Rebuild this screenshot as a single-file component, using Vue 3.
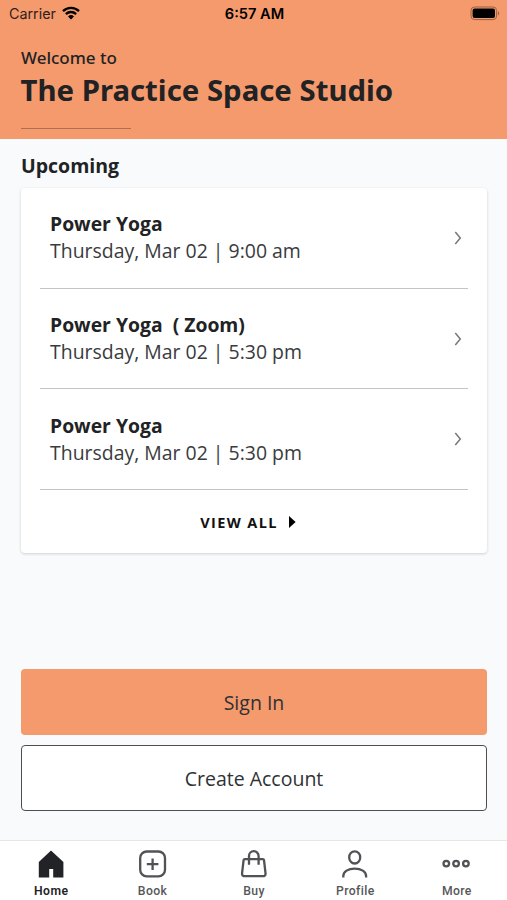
<template>
  <div class="screen">
    <header class="header">
      <div class="status-bar">
        <div class="carrier">
          <span>Carrier</span>
          <svg class="wifi" width="18" height="14" viewBox="0 0 18 14">
            <path d="M1 5.1a11.6 11.6 0 0 1 16 0" />
            <path d="M3.9 8.1a7.4 7.4 0 0 1 10.2 0" />
            <path class="wifi-dot" d="M6 10.4a4.4 4.4 0 0 1 6 0L9 13.5z" />
          </svg>
        </div>
        <span class="time">6:57 AM</span>
        <svg class="battery" width="31" height="15" viewBox="0 0 31 15">
          <rect class="battery-case" x="1" y="1" width="25.6" height="12.6" rx="3.6" />
          <rect x="2.6" y="2.6" width="22.4" height="9.4" rx="2" />
          <path class="battery-tip" d="M28 5.2q2.4 2.1 0 4.2z" />
        </svg>
      </div>
      <p class="welcome">Welcome to</p>
      <h1>The Practice Space Studio</h1>
      <div class="title-line"></div>
    </header>

    <main class="content">
      <h2>Upcoming</h2>
      <section class="card">
        <div v-for="(item, i) in classes" :key="i" class="class-row">
          <div>
            <div class="class-name">{{ item.name }}</div>
            <div class="class-time">{{ item.time }}</div>
          </div>
          <svg class="chevron" width="8" height="14" viewBox="0 0 8 14">
            <path d="M1.3 1 6.3 7 1.3 13" />
          </svg>
        </div>
        <div class="view-all">
          <span>VIEW ALL</span>
          <svg width="7" height="12" viewBox="0 0 7 12"><path d="M0 0 6.6 6 0 12z" /></svg>
        </div>
      </section>

      <div class="actions">
        <button class="btn primary">Sign In</button>
        <button class="btn outline">Create Account</button>
      </div>
    </main>

    <nav class="tabs">
      <div v-for="tab in tabs" :key="tab" class="tab" :class="{ active: tab === activeTab }" @click="activeTab = tab">
        <svg class="tab-icon" width="30" height="30" viewBox="0 0 30 30">
          <path v-if="tab === 'Home'" class="solid" d="M15 1.4 27.4 13V28.4H17.2V20H13.2V28.4H2.8V13z" />
          <template v-else-if="tab === 'Book'">
            <rect x="2.2" y="2.5" width="24.8" height="24.8" rx="6.5" />
            <path d="M14.6 9.4v11.6M8.8 15.2h11.6" />
          </template>
          <template v-else-if="tab === 'Buy'">
            <path d="M5.8 10.1H23.8Q24.8 10.1 25 11.1L26.5 24Q26.9 27.2 23.6 27.2H6Q2.7 27.2 3.1 24L4.6 11.1Q4.8 10.1 5.8 10.1z" />
            <path d="M10 15.8V7a4.8 4.8 0 0 1 9.6 0v8.8" />
          </template>
          <template v-else-if="tab === 'Profile'">
            <ellipse cx="14.7" cy="8.4" rx="5.5" ry="6.1" />
            <path d="M3.3 28.4V27C3.3 22.5 8.2 19.6 14.7 19.6S26.1 22.5 26.1 27v1.4" />
          </template>
          <template v-else>
            <circle cx="4.3" cy="14.6" r="2.8" />
            <circle cx="14.1" cy="14.6" r="2.8" />
            <circle cx="23.9" cy="14.6" r="2.8" />
          </template>
        </svg>
        <span>{{ tab }}</span>
      </div>
    </nav>
  </div>
</template>

<script setup>
import { ref } from 'vue'

const classes = [
  { name: 'Power Yoga', time: 'Thursday, Mar 02 | 9:00 am' },
  { name: 'Power Yoga  ( Zoom)', time: 'Thursday, Mar 02 | 5:30 pm' },
  { name: 'Power Yoga', time: 'Thursday, Mar 02 | 5:30 pm' },
]
const tabs = ['Home', 'Book', 'Buy', 'Profile', 'More']
const activeTab = ref('Home')
</script>

<style>
body {
  margin: 0;
}
</style>

<style scoped>
.screen {
  display: flex;
  flex-direction: column;
  height: 900px;
  overflow: hidden;
  background: #f8fafc;
  color: #212224;
  font-family: "Open Sans", sans-serif;
}
.header {
  box-sizing: border-box;
  height: 139px;
  background: #f59a6d;
}
.status-bar {
  display: grid;
  grid-template-columns: 1fr auto 1fr;
  align-items: center;
  height: 28px;
  padding: 0 7px 0 9px;
  color: #000;
  font: 14.3px/28px Inter, sans-serif;
}
.carrier {
  display: flex;
  align-items: center;
  gap: 6px;
  color: #30211a;
}
.wifi {
  margin-top: -2px;
  fill: none;
  stroke: #000;
  stroke-width: 2.4;
}
.wifi-dot {
  fill: #000;
  stroke: none;
}
.time {
  font-size: 14.6px;
  font-weight: 600;
}
.battery {
  justify-self: end;
  margin: -2px -1px 0 0;
}
.battery-case {
  fill: none;
  stroke: #98603f;
}
.battery-tip {
  fill: #98603f;
}
.welcome {
  margin: 18px 0 0 21px;
  font: 500 17px/24px "Noto Sans", sans-serif;
}
h1 {
  margin: 0 0 0 20.5px;
  font: 700 29.35px/40px "Noto Sans", sans-serif;
}
.title-line {
  width: 110px;
  height: 1px;
  margin: 18px 0 0 21px;
  background: #ad7050;
}
.content {
  flex: 1;
  display: flex;
  flex-direction: column;
  padding: 0 20px 29px 21px;
}
h2 {
  margin: 13px 0 8px;
  font-size: 19.5px;
  font-weight: 700;
  line-height: 28px;
}
.card {
  box-sizing: border-box;
  height: 365px;
  padding: 0 19px;
  border-radius: 4px;
  background: #fff;
  box-shadow: 0 1px 3px rgba(0, 0, 0, 0.17);
}
.class-row {
  box-sizing: border-box;
  display: flex;
  align-items: center;
  justify-content: space-between;
  height: 100.7px;
  padding: 0 6px 1px 10px;
  border-bottom: 1px solid #c4c4c4;
}
.class-name {
  font-size: 19.35px;
  font-weight: 700;
  line-height: 27px;
  white-space: pre;
}
.class-time {
  font-size: 19.45px;
  line-height: 27px;
  color: #3a3b3d;
}
.chevron {
  margin-top: 1px;
  fill: none;
  stroke: #777;
  stroke-width: 1.5;
}
.view-all {
  display: flex;
  align-items: center;
  justify-content: center;
  gap: 11px;
  height: 64px;
  padding-right: 12px;
  color: #111;
  font-size: 14.5px;
  font-weight: 700;
  letter-spacing: 1.4px;
}
.actions {
  display: flex;
  flex-direction: column;
  gap: 10px;
  margin-top: auto;
}
.btn {
  box-sizing: border-box;
  height: 66px;
  border: 0;
  border-radius: 4px;
  color: #303133;
  font: 19.5px "Open Sans", sans-serif;
}
.primary {
  background: #f59a6d;
}
.outline {
  border: 1.5px solid #4d4e50;
  background: #fff;
}
.tabs {
  box-sizing: border-box;
  display: flex;
  height: 60px;
  border-top: 1px solid #e4e6e8;
  background: #fff;
}
.tab {
  flex: 1;
  display: flex;
  flex-direction: column;
  align-items: center;
  padding: 8px 0 0 1px;
  color: #55575a;
  font: 500 12.2px/16px Roboto, sans-serif;
  letter-spacing: 0.4px;
}
.tab span {
  margin-top: 4px;
}
.tab.active {
  color: #222326;
  font-weight: 600;
}
.tab-icon {
  fill: none;
  stroke: #505255;
  stroke-width: 2.3;
}
.solid {
  fill: #222326;
  stroke: none;
}
</style>
